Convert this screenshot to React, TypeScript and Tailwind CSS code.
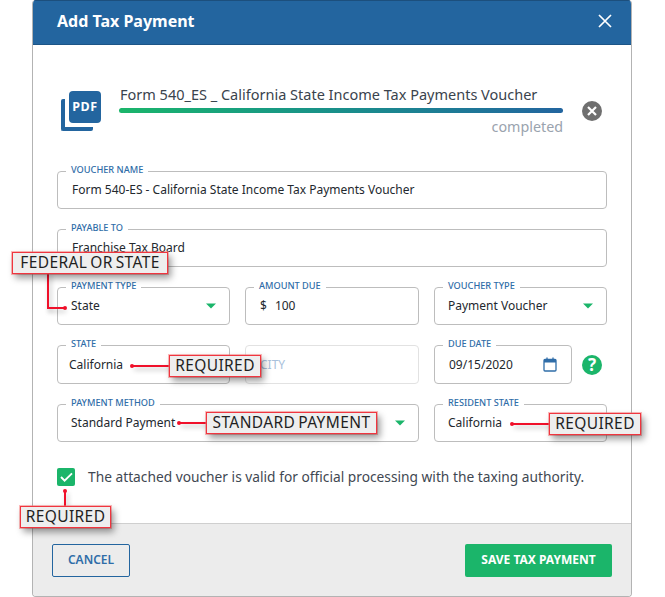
import React from "react";

const Caret = () => (
  <svg width="10" height="6" viewBox="0 0 10 6" className="block"><path d="M0 0.5h10L5 5.5z" fill="#1bb56a" /></svg>
);

function Field({ label, className = "", children, faint = false }: { label?: string; className?: string; children?: React.ReactNode; faint?: boolean }) {
  return (
    <div className={`relative flex items-center rounded-[4px] border bg-white ${faint ? "border-[#e2e2e2]" : "border-[#bdbdbd]"} ${className}`}>
      {label && (
        <span className="absolute left-[8px] top-[-8px] bg-white px-[5px] text-[9.2px] leading-[12px] font-medium uppercase text-[#2f6da8]">
          {label}
        </span>
      )}
      {children}
    </div>
  );
}

function Note({ text, className }: { text: string; className: string }) {
  return (
    <div className={`absolute flex h-[22px] items-center justify-center whitespace-nowrap border-[1.5px] border-[#f0353f] bg-[#eeeeee] text-[15.5px] leading-none tracking-[0.4px] [word-spacing:-1.5px] text-[#1f1f1f] shadow-[3px_4px_7px_rgba(0,0,0,0.4),0_0_0_1px_rgba(255,120,120,0.5)] ${className}`}>
      {text}
    </div>
  );
}

const Dot = ({ className }: { className: string }) => (
  <div className={`absolute h-[4px] w-[4px] rounded-full bg-[#f0102a] ${className}`} />
);
const Line = ({ className }: { className: string }) => (
  <div className={`absolute bg-[#f0102a] shadow-[2px_3px_5px_rgba(0,0,0,0.28)] ${className}`} />
);

export default function App() {
  return (
    <div className="relative h-[597px] w-[665px] overflow-hidden bg-white font-['Noto_Sans','Open_Sans',sans-serif] text-[#2b3138]">
      <div className="ml-[32px] flex h-[597px] w-[600px] flex-col overflow-hidden rounded-[4px] border border-[#b3b3b3] border-t-0">
        <header className="flex h-[45px] shrink-0 items-center justify-between border-y border-t-[#1c4f7d] border-b-[#1c5587] bg-[#23659f] pb-[4px] pl-[24px] pr-[18px] text-white">
          <h1 className="text-[16px] font-bold leading-none">Add Tax Payment</h1>
          <svg width="16" height="16" viewBox="0 0 16 16"><path d="M2 2l12 12M14 2L2 14" stroke="white" strokeWidth="1.7" /></svg>
        </header>

        <main className="flex flex-1 flex-col px-[24px] bg-white">
          <section className="flex h-[126px] items-start pt-[39px]">
            <div className="relative ml-[4px] mt-[7px] h-[40px] w-[40px] shrink-0">
              <div className="absolute left-0 top-[8px] h-[32px] w-[32px] rounded-[2px] border-b-[4px] border-l-[4px] border-[#23659f]" />
              <div className="absolute left-[8px] top-0 flex h-[32px] w-[32px] items-center justify-center rounded-[4px] bg-[#23659f] text-[12.5px] font-bold tracking-[0.5px] text-white">PDF</div>
            </div>
            <div className="ml-[18px] w-[444px] shrink-0">
              <div className="pl-[1px] text-[14.5px] leading-[20px] text-[#3a434d] whitespace-nowrap">Form 540_ES _ California State Income Tax Payments Voucher</div>
              <div className="mt-[4px] h-[5px] rounded-full bg-gradient-to-r from-[#1bb56a] to-[#23659f]" />
              <div className="mt-[5px] text-right text-[14.3px] leading-[18px] text-[#9aa3ae]">completed</div>
            </div>
            <div className="ml-[19px] mt-[17px] flex h-[20px] w-[20px] items-center justify-center rounded-full bg-[#6f6f6f]">
              <svg width="12" height="12" viewBox="0 0 12 12"><path d="M2 2l8 8M10 2l-8 8" stroke="white" strokeWidth="2.2" /></svg>
            </div>
          </section>

          <div className="flex flex-col gap-[20px] text-[12px] text-[#23282e]">
            <Field label="Voucher Name" className="h-[38px] w-[550px] pl-[14px]">Form 540-ES - California State Income Tax Payments Voucher</Field>
            <Field label="Payable To" className="h-[38px] w-[550px] pl-[14px]">Franchise Tax Board</Field>
            <div className="flex gap-[15px]">
              <Field label="Payment Type" className="h-[38px] w-[173px] justify-between pl-[13px] pr-[13px]">State<Caret /></Field>
              <Field label="Amount Due" className="h-[38px] w-[174px] pl-[14px]"><span>$</span><span className="ml-[8px]">100</span></Field>
              <Field label="Voucher Type" className="h-[38px] w-[173px] justify-between pl-[13px] pr-[13px]">Payment Voucher<Caret /></Field>
            </div>
            <div className="flex gap-[15px]">
              <Field label="State" className="h-[39px] w-[173px] pl-[11px]">California</Field>
              <Field faint className="h-[39px] w-[174px] pl-[14px] text-[#a9c1dc]">CITY</Field>
              <Field label="Due Date" className="h-[39px] w-[138px] justify-between pl-[14px] pr-[14px]">
                09/15/2020
                <svg width="14" height="15" viewBox="0 0 14 15" fill="none"><rect x="1" y="2.5" width="12" height="11.5" rx="1" stroke="#2f6da8" strokeWidth="1.3" /><rect x="1" y="2.5" width="12" height="3" fill="#2f6da8" /><path d="M4 0.5v2M10 0.5v2" stroke="#2f6da8" strokeWidth="1.3" /></svg>
              </Field>
              <div className="ml-[-5px] flex h-[39px] items-center">
                <div className="flex h-[20px] w-[20px] items-center justify-center rounded-full bg-[#1bb56a] text-[17px] font-bold leading-none text-white">?</div>
              </div>
            </div>
            <div className="flex gap-[15px]">
              <Field label="Payment Method" className="h-[38px] w-[362px] justify-between pl-[13px] pr-[13px]">Standard Payment<Caret /></Field>
              <Field label="Resident State" className="h-[38px] w-[173px] pl-[13px]">California</Field>
            </div>
          </div>

          <div className="mt-[26px] flex items-center">
            <div className="flex h-[18px] w-[18px] items-center justify-center rounded-[2px] bg-[#1bb56a]">
              <svg width="13" height="10" viewBox="0 0 13 10" fill="none"><path d="M1 5l3.6 3.6L12 1.4" stroke="white" strokeWidth="1.9" /></svg>
            </div>
            <span className="ml-[13px] text-[13.75px] leading-[18px] whitespace-nowrap text-[#3f4852]">The attached voucher is valid for official processing with the taxing authority.</span>
          </div>
        </main>

        <footer className="flex h-[73px] shrink-0 items-center justify-between border-t border-[#cfcfcf] bg-[#ececec] pl-[19px] pr-[19px]">
          <button className="h-[33px] w-[78px] rounded-[2px] border border-[#23659f] text-[12px] font-semibold text-[#2f6da8]">CANCEL</button>
          <button className="h-[33px] w-[147px] rounded-[2px] bg-[#1bb56a] text-[12px] font-bold text-white">SAVE TAX PAYMENT</button>
        </footer>
      </div>

      <Line className="left-[47px] top-[272px] h-[37px] w-[2px]" />
      <Line className="left-[47px] top-[307px] h-[2px] w-[17px]" />
      <Dot className="left-[63px] top-[306px]" />
      <Note text="FEDERAL OR STATE" className="left-[12px] top-[252px] w-[156px]" />

      <Line className="left-[132px] top-[365px] h-[2px] w-[40px]" />
      <Dot className="left-[130px] top-[364px]" />
      <Note text="REQUIRED" className="left-[169px] top-[355px] w-[92px]" />

      <Line className="left-[179px] top-[422px] h-[2px] w-[30px]" />
      <Dot className="left-[177px] top-[421px]" />
      <Note text="STANDARD PAYMENT" className="left-[206px] top-[412px] w-[171px]" />

      <Line className="left-[512px] top-[423px] h-[2px] w-[40px]" />
      <Dot className="left-[510px] top-[422px]" />
      <Note text="REQUIRED" className="left-[549px] top-[413px] w-[92px]" />

      <Line className="left-[64px] top-[490px] h-[17px] w-[2px]" />
      <Dot className="left-[63px] top-[489px]" />
      <Note text="REQUIRED" className="left-[20px] top-[506px] w-[91px]" />
    </div>
  );
}
